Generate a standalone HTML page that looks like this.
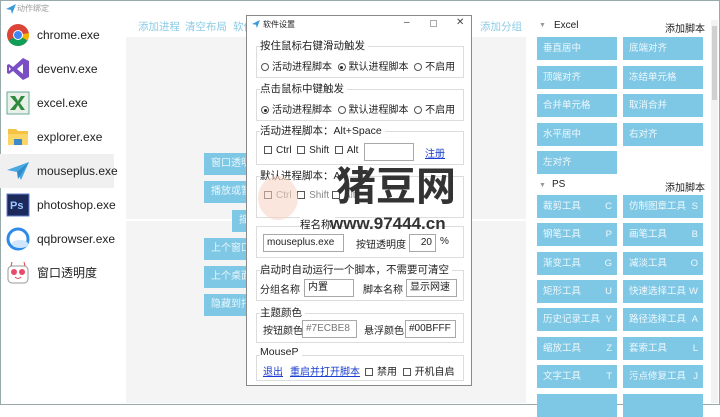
<!DOCTYPE html>
<html><head><meta charset="utf-8"><style>
*{margin:0;padding:0;box-sizing:border-box}
body{width:720px;height:405px;overflow:hidden;background:#fff;font-family:"Liberation Sans","Noto Sans CJK SC",sans-serif;position:relative;color:#222}
.a{position:absolute;white-space:nowrap}
.li{position:absolute;left:0;width:114px;height:34px;font-size:12px;line-height:34px;padding-left:37px}
.ic{position:absolute;left:6px;top:5px;width:24px;height:24px}
.tl{color:#8ccbe6;font-size:10.5px}
.mb{position:absolute;background:#7ec8e6;color:#eaf6fb;font-size:10px;line-height:22px;height:22px;padding-left:7px;overflow:hidden}
.rb{position:absolute;background:#7ec8e6;color:#eef8fc;font-size:9.5px;line-height:23px;height:23px;width:80px;padding-left:6px;overflow:hidden}
.rb i{position:absolute;right:5px;font-style:normal;background:#7ec8e6;padding-left:2px}
.g{position:absolute;left:256px;width:208px;border:1px solid #dcdcdc}
.gl{position:absolute;font-size:10.5px;background:#fff;padding-right:3px;color:#222}
.t{position:absolute;font-size:10px;color:#222;white-space:nowrap}
.in{position:absolute;border:1px solid #a8a8a8;background:#fff;font-size:10px;line-height:15px;padding-left:3px;height:18px}
.r{display:inline-block;width:8px;height:8px;border:1px solid #555;border-radius:50%;margin-right:3px;vertical-align:-1px;position:relative}
.r.on::after{content:"";position:absolute;left:1.5px;top:1.5px;width:3px;height:3px;border-radius:50%;background:#222}
.c{display:inline-block;width:8px;height:8px;border:1px solid #555;margin-right:4px;vertical-align:-1px}
.lk{color:#1a3fd0;text-decoration:underline}
</style></head><body>
<div class="a" style="left:0;top:0;width:720px;height:405px;border:1px solid #9aa;"></div>
<svg class="a" style="left:6px;top:4px" width="10" height="10" viewBox="0 0 10 10"><path d="M0 5 L10 0 L6 10 L5 6 Z" fill="#3a9ad9"/></svg>
<div class="a" style="left:17px;top:3px;font-size:8px;color:#999">动作绑定</div>

<div class="li" style="top:18px">chrome.exe<svg class="ic" viewBox="0 0 24 24"><circle cx="12" cy="12" r="11" fill="#db4437"/><path d="M12 12 L2.5 17.5 A11 11 0 0 0 12 23 Z M12 12 L12 23 A11 11 0 0 0 21.5 17.5 L12 12" fill="#0f9d58"/><path d="M12 12 L21.5 17.5 A11 11 0 0 0 23 12 L23 10 Z" fill="#f4b400"/><circle cx="12" cy="12" r="5" fill="#fff"/><circle cx="12" cy="12" r="4" fill="#4285f4"/></svg></div>
<div class="li" style="top:52px">devenv.exe<svg class="ic" viewBox="0 0 24 24"><path d="M17 1 L23 4 L23 20 L17 23 L7 14 L3 17 L1 16 L1 8 L3 7 L7 10 Z M17 7 L11 12 L17 17 Z M3 10 L3 14 L5 12 Z" fill="#7b4fc4"/></svg></div>
<div class="li" style="top:86px">excel.exe<svg class="ic" viewBox="0 0 24 24"><rect x="1" y="1" width="22" height="22" fill="#e8f0e8" stroke="#6a9"/><path d="M4 5 L9 5 L12 10 L15 5 L19 5 L14 12 L19 19 L15 19 L12 14 L9 19 L4 19 L10 12 Z" fill="#2f8a3f"/></svg></div>
<div class="li" style="top:120px">explorer.exe<svg class="ic" viewBox="0 0 24 24"><path d="M2 4 H10 L12 6 H22 V20 H2 Z" fill="#f5c242"/><rect x="2" y="9" width="20" height="11" fill="#fbd566"/><rect x="8" y="14" width="8" height="6" fill="#3a8cc8"/></svg></div>
<div class="li" style="top:154px;background:#f0f0f0">mouseplus.exe<svg class="ic" viewBox="0 0 24 24"><path d="M1 11 L23 3 L15 21 L11 13 Z" fill="#4aa8e0"/><path d="M11 13 L23 3 L12 20 Z" fill="#2f8ccc"/></svg></div>
<div class="li" style="top:188px">photoshop.exe<svg class="ic" viewBox="0 0 24 24"><rect x="1" y="1" width="22" height="22" fill="#1b2a5a" stroke="#5d7ec9"/><text x="4" y="16" font-size="11" fill="#9cc6ff" font-family="Liberation Sans" font-weight="bold">Ps</text></svg></div>
<div class="li" style="top:222px">qqbrowser.exe<svg class="ic" viewBox="0 0 24 24"><circle cx="12" cy="12" r="10" fill="none" stroke="#2d8ae6" stroke-width="3"/><ellipse cx="14" cy="17" rx="8" ry="4" fill="#cfe6fb"/></svg></div>
<div class="li" style="top:256px">窗口透明度<svg class="ic" viewBox="0 0 24 24"><rect x="2" y="5" width="20" height="17" rx="4" fill="#fff" stroke="#999"/><circle cx="8" cy="11" r="3" fill="#e84a6a"/><circle cx="16" cy="11" r="3" fill="#e84a6a"/><path d="M9 16 Q12 19 15 16" stroke="#e84a6a" fill="none"/><path d="M5 5 L6 1 M19 5 L18 1" stroke="#d44"/></svg></div>

<div class="a tl" style="left:138px;top:19px">添加进程</div>
<div class="a tl" style="left:185px;top:19px">清空布局</div>
<div class="a tl" style="left:233px;top:19px">软件</div>
<div class="a tl" style="left:480px;top:19px">添加分组</div>

<div class="a" style="left:126px;top:37px;width:400px;height:366px;background:#f4f4f4"></div>
<div class="a" style="left:126px;top:219px;width:400px;height:2px;background:#fff"></div>
<div class="mb" style="left:204px;top:153px;width:50px">窗口透明</div>
<div class="mb" style="left:204px;top:181px;width:50px">播放或暂</div>
<div class="mb" style="left:232px;top:210px;width:20px">摇</div>
<div class="mb" style="left:204px;top:238px;width:50px">上个窗口</div>
<div class="mb" style="left:204px;top:266px;width:50px">上个桌面</div>
<div class="mb" style="left:204px;top:294px;width:50px">隐藏到托</div>

<div class="a" style="left:554px;top:20px;font-size:10px">Excel</div>
<div class="a" style="left:539px;top:22px;font-size:7px;color:#999">▼</div>
<div class="a" style="left:665px;top:20px;font-size:10px">添加脚本</div>
<div class="rb" style="left:537px;top:37px">垂直居中</div><div class="rb" style="left:623px;top:37px">底端对齐</div>
<div class="rb" style="left:537px;top:66px">顶端对齐</div><div class="rb" style="left:623px;top:66px">冻结单元格</div>
<div class="rb" style="left:537px;top:94px">合并单元格</div><div class="rb" style="left:623px;top:94px">取消合并</div>
<div class="rb" style="left:537px;top:123px">水平居中</div><div class="rb" style="left:623px;top:123px">右对齐</div>
<div class="rb" style="left:537px;top:151px">左对齐</div>
<div class="a" style="left:539px;top:182px;font-size:7px;color:#999">▼</div>
<div class="a" style="left:552px;top:179px;font-size:10px">PS</div>
<div class="a" style="left:665px;top:179px;font-size:10px">添加脚本</div>
<div class="rb" style="left:537px;top:195px">裁剪工具<i>C</i></div><div class="rb" style="left:623px;top:195px">仿制图章工具<i>S</i></div>
<div class="rb" style="left:537px;top:223px">钢笔工具<i>P</i></div><div class="rb" style="left:623px;top:223px">画笔工具<i>B</i></div>
<div class="rb" style="left:537px;top:252px">渐变工具<i>G</i></div><div class="rb" style="left:623px;top:252px">减淡工具<i>O</i></div>
<div class="rb" style="left:537px;top:280px">矩形工具<i>U</i></div><div class="rb" style="left:623px;top:280px">快速选择工具<i>W</i></div>
<div class="rb" style="left:537px;top:308px">历史记录工具<i>Y</i></div><div class="rb" style="left:623px;top:308px">路径选择工具<i>A</i></div>
<div class="rb" style="left:537px;top:337px">缩放工具<i>Z</i></div><div class="rb" style="left:623px;top:337px">套索工具<i>L</i></div>
<div class="rb" style="left:537px;top:365px">文字工具<i>T</i></div><div class="rb" style="left:623px;top:365px">污点修复工具<i>J</i></div>
<div class="rb" style="left:537px;top:394px"></div><div class="rb" style="left:623px;top:394px"></div>
<div class="a" style="left:711px;top:20px;width:7px;height:383px;background:#f2f2f2"></div>
<div class="a" style="left:712px;top:26px;width:5px;height:74px;background:#d0d0d0"></div>

<!-- dialog -->
<div class="a" style="left:246px;top:15px;width:226px;height:371px;background:#fff;border:1px solid #888"></div>
<svg class="a" style="left:252px;top:20px" width="8" height="8" viewBox="0 0 10 10"><path d="M0 5 L10 0 L6 10 L5 6 Z" fill="#3a9ad9"/></svg>
<div class="a" style="left:263px;top:19px;font-size:8px">软件设置</div>
<div class="a" style="left:404px;top:17px;font-size:10px;color:#444">–</div>
<div class="a" style="left:430px;top:20px;width:7px;height:7px;border:1px solid #aaa"></div>
<div class="a" style="left:456px;top:17px;font-size:10px;color:#444">✕</div>

<div class="g" style="top:46px;height:32px"></div><div class="gl" style="left:260px;top:38px">按住鼠标右键滑动触发</div>
<div class="t" style="left:261px;top:58px"><span class="r"></span>活动进程脚本 &nbsp;<span class="r on"></span>默认进程脚本 &nbsp;<span class="r"></span>不启用</div>
<div class="g" style="top:89px;height:32px"></div><div class="gl" style="left:260px;top:81px">点击鼠标中键触发</div>
<div class="t" style="left:261px;top:101px"><span class="r on"></span>活动进程脚本 &nbsp;<span class="r"></span>默认进程脚本 &nbsp;<span class="r"></span>不启用</div>
<div class="g" style="top:131px;height:34px"></div><div class="gl" style="left:260px;top:123px">活动进程脚本：Alt+Space</div>
<div class="t" style="left:264px;top:145px"><span class="c"></span>Ctrl &nbsp;<span class="c"></span>Shift &nbsp;<span class="c"></span>Alt</div>
<div class="in" style="left:364px;top:143px;width:50px"></div>
<div class="t lk" style="left:425px;top:145px">注册</div>
<div class="g" style="top:176px;height:42px"></div><div class="gl" style="left:260px;top:168px">默认进程脚本：Alt</div>
<div class="t" style="left:264px;top:190px;color:#888"><span class="c"></span>Ctrl &nbsp;<span class="c"></span>Shift <span class="c"></span>Alt</div>
<div class="g" style="top:226px;height:32px"></div><div class="gl" style="left:300px;top:217px">程名称</div>
<div class="in" style="left:263px;top:234px;width:81px">mouseplus.exe</div>
<div class="t" style="left:356px;top:236px">按钮透明度</div>
<div class="in" style="left:409px;top:234px;width:27px;text-align:right;padding-right:3px">20</div>
<div class="t" style="left:440px;top:236px">%</div>
<div class="g" style="top:270px;height:31px"></div><div class="gl" style="left:260px;top:262px">启动时自动运行一个脚本，不需要可清空</div>
<div class="t" style="left:260px;top:281px">分组名称</div><div class="in" style="left:304px;top:279px;width:50px">内置</div>
<div class="t" style="left:363px;top:281px">脚本名称</div><div class="in" style="left:406px;top:279px;width:51px">显示网速</div>
<div class="g" style="top:313px;height:30px"></div><div class="gl" style="left:260px;top:305px">主题颜色</div>
<div class="t" style="left:263px;top:322px">按钮颜色</div><div class="in" style="left:302px;top:320px;width:55px;color:#777">#7ECBE8</div>
<div class="t" style="left:364px;top:322px">悬浮颜色</div><div class="in" style="left:405px;top:320px;width:51px">#00BFFF</div>
<div class="g" style="top:355px;height:26px"></div><div class="gl" style="left:260px;top:346px">MouseP</div>
<div class="t lk" style="left:263px;top:363px">退出</div>
<div class="t lk" style="left:290px;top:363px">重启并打开脚本</div>
<div class="t" style="left:365px;top:363px"><span class="c"></span>禁用 &nbsp;<span class="c"></span>开机自启</div>

<!-- watermark -->
<div class="a" style="left:336px;top:158px;font-size:40px;font-weight:bold;color:#333;font-family:'Noto Sans CJK SC',sans-serif;line-height:50px">猪豆网</div>
<div class="a" style="left:330px;top:214px;font-size:17px;color:#333;font-weight:bold">www.97444.cn</div>
<div class="a" style="left:258px;top:176px;width:40px;height:44px;border-radius:50%;background:#f6d2c0;opacity:.55"></div>
</body></html>
